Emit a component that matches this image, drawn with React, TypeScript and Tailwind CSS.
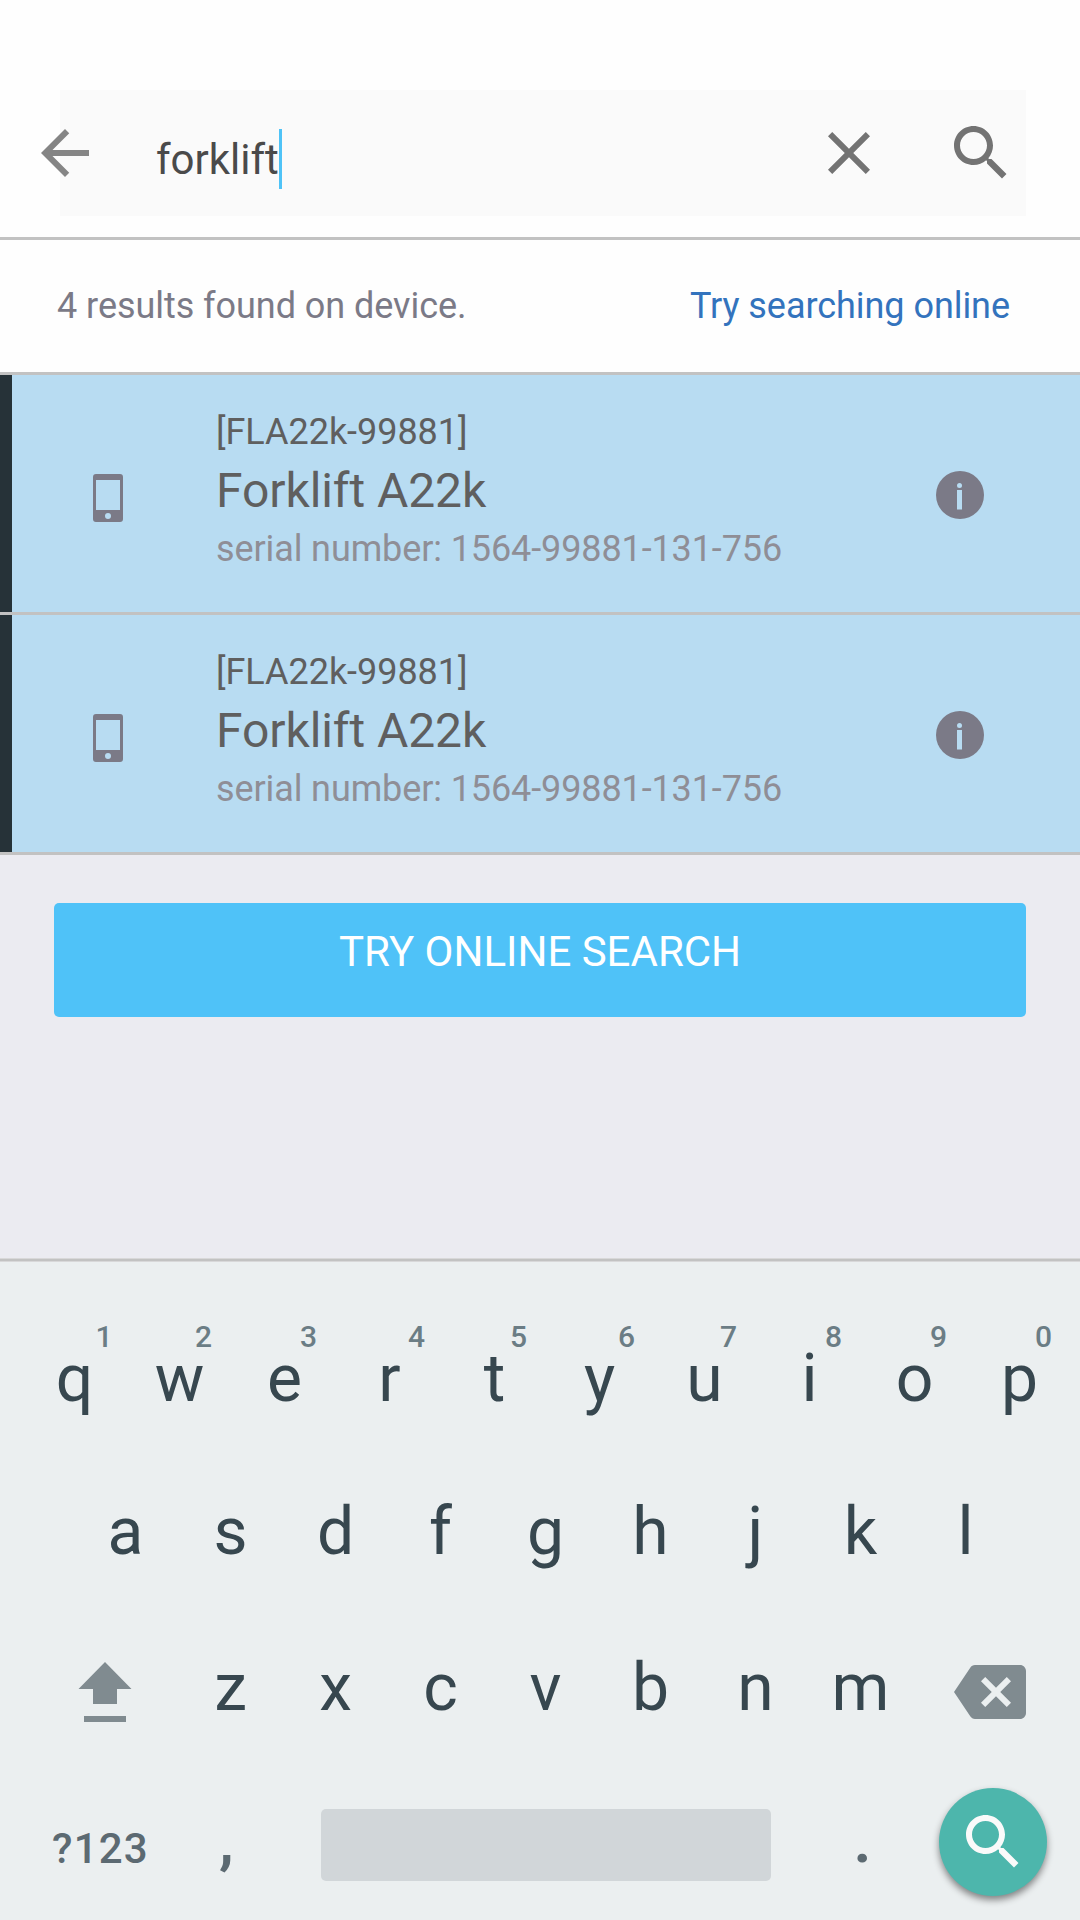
import React from "react";

const topRow = [
  { key: "q", hint: "1", at: 104 },
  { key: "w", hint: "2", at: 203.5 },
  { key: "e", hint: "3", at: 308.5 },
  { key: "r", hint: "4", at: 416.5 },
  { key: "t", hint: "5", at: 518.5 },
  { key: "y", hint: "6", at: 626.5 },
  { key: "u", hint: "7", at: 728.5 },
  { key: "i", hint: "8", at: 833.5 },
  { key: "o", hint: "9", at: 938.5 },
  { key: "p", hint: "0", at: 1043.5 },
];

function BackIcon() {
  return (
    <svg viewBox="0 0 24 24" className="size-[72px] fill-[#858585]">
      <path d="M20 11H7.83l5.59-5.59L12 4l-8 8 8 8 1.41-1.41L7.83 13H20v-2z" />
    </svg>
  );
}

function ClearIcon() {
  return (
    <svg viewBox="0 0 24 24" className="size-[72px] fill-[#737373]">
      <path d="M19 6.41L17.59 5 12 10.59 6.41 5 5 6.41 10.59 12 5 17.59 6.41 19 12 13.41 17.59 19 19 17.59 13.41 12z" />
    </svg>
  );
}

function SearchIcon({ className }: { className: string }) {
  return (
    <svg viewBox="0 0 24 24" className={className}>
      <path d="M15.5 14h-.79l-.28-.27C15.41 12.59 16 11.11 16 9.5 16 5.91 13.09 3 9.5 3S3 5.91 3 9.5 5.91 16 9.5 16c1.61 0 3.09-.59 4.23-1.57l.27.28v.79l5 4.99L20.49 19l-4.99-5zm-6 0C7.01 14 5 11.99 5 9.5S7.01 5 9.5 5 14 7.01 14 9.5 11.99 14 9.5 14z" />
    </svg>
  );
}

function ResultRow() {
  return (
    <div className="flex h-[240px] border-b-[3px] border-[#c2c2c2] bg-[#b8dcf2]">
      <div className="w-3 bg-[#263238]" />
      <svg viewBox="0 0 30 48" className="mt-[99px] ml-[81px] h-12 w-[30px]">
        <path
          fill="#7b7a87"
          fillRule="evenodd"
          d="M3 0H27a3 3 0 0 1 3 3V45a3 3 0 0 1-3 3H3a3 3 0 0 1-3-3V3a3 3 0 0 1 3-3ZM3 6V36H27V6ZM15 39a3 3 0 1 0 0 6 3 3 0 0 0 0-6Z"
        />
      </svg>
      <div className="ml-[93px] flex-1 pt-[39px] text-4xl leading-9 whitespace-nowrap text-[#5f5f5f]">
        <div className="tracking-[-0.04px]">[FLA22k-99881]</div>
        <div className="mt-[17px] text-5xl leading-[48px] tracking-[-0.08px]">Forklift A22k</div>
        <div className="mt-4 tracking-[-0.11px] text-[#8f8e96]">serial number: 1564-99881-131-756</div>
      </div>
      <svg viewBox="0 0 48 48" className="mt-24 mr-24 size-12">
        <circle cx="24" cy="24" r="24" fill="#7b7a87" />
        <circle cx="23.5" cy="14.5" r="2.5" fill="#b8dcf2" />
        <rect x="21" y="19" width="5" height="19.5" fill="#b8dcf2" />
      </svg>
    </div>
  );
}

function Key({ label }: { label: string }) {
  return <div className="w-[105px] text-center text-[66px] leading-[66px] text-[#37474f]">{label}</div>;
}

export default function App() {
  return (
    <div className="flex h-[1920px] w-[1080px] flex-col overflow-hidden bg-[#ebebf1] font-['Roboto',sans-serif]">
      <header className="h-60 border-b-[3px] border-[#c2c2c2] bg-[#fefefe] pt-[90px] pl-[60px]">
        <div className="flex h-[126px] w-[966px] items-center bg-[#fafafa]">
          <div className="-ml-[31px]">
            <BackIcon />
          </div>
          <div className="mt-3 ml-[55px] flex flex-1 items-center text-[42px] leading-[60px] text-[#4a4a4a]">
            <span className="pt-0.5 leading-[58px]">forklift</span>
            <span className="h-[60px] w-[3px] bg-[#4fc3f7]" />
          </div>
          <ClearIcon />
          <SearchIcon className="mr-[9px] ml-[60px] size-[72px] fill-[#737373]" />
        </div>
      </header>

      <div className="flex h-[135px] items-start justify-between border-b-[3px] border-[#c2c2c2] bg-[#fefefe] pt-12 pr-[70px] pl-[57px] text-4xl leading-9 tracking-[-0.05px]">
        <span className="text-[#7b7a87]">4 results found on device.</span>
        <span className="text-[#3373bd]">Try searching online</span>
      </div>

      <ResultRow />
      <ResultRow />

      <main className="h-[403px] px-[54px] pt-12">
        <button className="block h-[114px] w-[972px] rounded-[5px] bg-[#4fc2f8] pb-4 text-center text-[42px] leading-[42px] text-white">
          TRY ONLINE SEARCH
        </button>
      </main>

      <section className="relative h-[662px] bg-[#ebeff0]">
        <div className="h-1 border-y border-[#d8d8d9] bg-[#c2c2c2]" />
        {topRow.map(({ hint, at }) => (
          <span
            key={hint}
            className="absolute top-16 w-6 -translate-x-1/2 text-center text-[30px] leading-[30px] font-medium text-[#6b7d85]"
            style={{ left: at }}
          >
            {hint}
          </span>
        ))}
        <div className="ml-[22px] flex w-[1050px] pt-[84px]">
          {topRow.map(({ key }) => (
            <Key key={key} label={key} />
          ))}
        </div>
        <div className="mt-[87px] ml-[73px] flex w-[945px]">
          {"asdfghjkl".split("").map((k) => (
            <Key key={k} label={k} />
          ))}
        </div>
        <div className="mt-[90px] flex items-start">
          <svg viewBox="0 0 54 60" className="mt-[7px] mr-[46px] ml-[78px] h-[60px] w-[54px] fill-[#808b90]">
            <path d="M27 0L53.5 27H39V42H15V27H.5ZM6 54H48V60H6Z" />
          </svg>
          {"zxcvbnm".split("").map((k) => (
            <Key key={k} label={k} />
          ))}
          <svg viewBox="0 0 24 24" className="mt-px ml-[41px] size-[72px] fill-[#808b90]">
            <path d="M22 3H7c-.69 0-1.23.35-1.59.88L0 12l5.41 8.11c.36.53.9.89 1.59.89h15c1.1 0 2-.9 2-2V5c0-1.1-.9-2-2-2zm-3 12.59L17.59 17 14 13.41 10.41 17 9 15.59 12.59 12 9 8.41 10.41 7 14 10.59 17.59 7 19 8.41 15.41 12 19 15.59z" />
          </svg>
        </div>
        <div className="mt-[60px] flex items-start font-medium text-[#5c6a72]">
          <div className="mt-10 ml-[52px] w-[122px] text-[42px] leading-[42px] tracking-[1.2px]">?123</div>
          <div className="mt-[24px] w-[105px] text-center text-[60px] leading-[60px] font-bold">,</div>
          <div className="mt-[21px] ml-[42px] h-[72px] w-[450px] rounded-[5px] bg-[#d1d6d9]" />
          <div className="mt-[24px] ml-[39px] w-[105px] text-center text-[60px] leading-[60px] font-bold">.</div>
          <div className="ml-6 flex size-[108px] items-center justify-center rounded-full bg-[#4db6ac] shadow-[0_4px_7px_rgba(0,0,0,0.45)]">
            <SearchIcon className="size-[72px] fill-[#fafafa]" />
          </div>
        </div>
      </section>
    </div>
  );
}
